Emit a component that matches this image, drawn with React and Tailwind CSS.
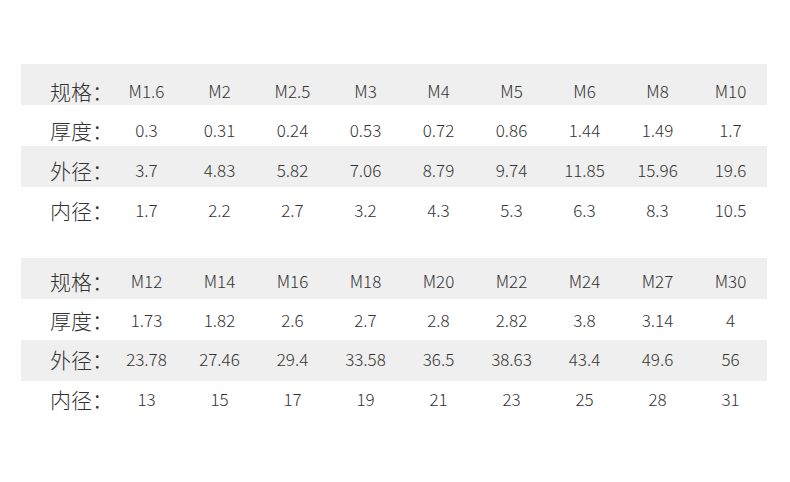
import React from "react";

const tables = [
  {
    rows: [
      { label: "规格：", values: ["M1.6", "M2", "M2.5", "M3", "M4", "M5", "M6", "M8", "M10"] },
      { label: "厚度：", values: ["0.3", "0.31", "0.24", "0.53", "0.72", "0.86", "1.44", "1.49", "1.7"] },
      { label: "外径：", values: ["3.7", "4.83", "5.82", "7.06", "8.79", "9.74", "11.85", "15.96", "19.6"] },
      { label: "内径：", values: ["1.7", "2.2", "2.7", "3.2", "4.3", "5.3", "6.3", "8.3", "10.5"] },
    ],
    offsets: ["pt-[12px]", "pt-[9px]", "pt-[6px]", "pt-[4px]"],
  },
  {
    rows: [
      { label: "规格：", values: ["M12", "M14", "M16", "M18", "M20", "M22", "M24", "M27", "M30"] },
      { label: "厚度：", values: ["1.73", "1.82", "2.6", "2.7", "2.8", "2.82", "3.8", "3.14", "4"] },
      { label: "外径：", values: ["23.78", "27.46", "29.4", "33.58", "36.5", "38.63", "43.4", "49.6", "56"] },
      { label: "内径：", values: ["13", "15", "17", "19", "21", "23", "25", "28", "31"] },
    ],
    offsets: ["pt-[4px]", "pt-[1px]", "pb-[3px]", "pb-[6px]"],
  },
];

const SpecTable = ({ rows, offsets }) => (
  <div className="w-[746px]">
    {rows.map((row, i) => (
      <div
        key={row.label}
        className={`flex h-[41px] items-center ${offsets[i]} ${i % 2 === 0 ? "bg-[#efefef]" : "bg-white"}`}
      >
        <div className="w-[89px] shrink-0 pl-[29px] text-[21px] whitespace-nowrap">{row.label}</div>
        {row.values.map((v, j) => (
          <div key={j} className="w-[73px] shrink-0 text-center">
            {v}
          </div>
        ))}
      </div>
    ))}
  </div>
);

export default function App() {
  return (
    <div
      className="w-[790px] h-[482px] bg-white pt-[64px] pl-[21px] text-[17px] leading-6 font-light text-[#333333]"
      style={{ fontFamily: '"Noto Sans CJK SC", "Noto Sans", sans-serif' }}
    >
      <div className="flex flex-col gap-[30px]">
        {tables.map((t, i) => (
          <SpecTable key={i} rows={t.rows} offsets={t.offsets} />
        ))}
      </div>
    </div>
  );
}
